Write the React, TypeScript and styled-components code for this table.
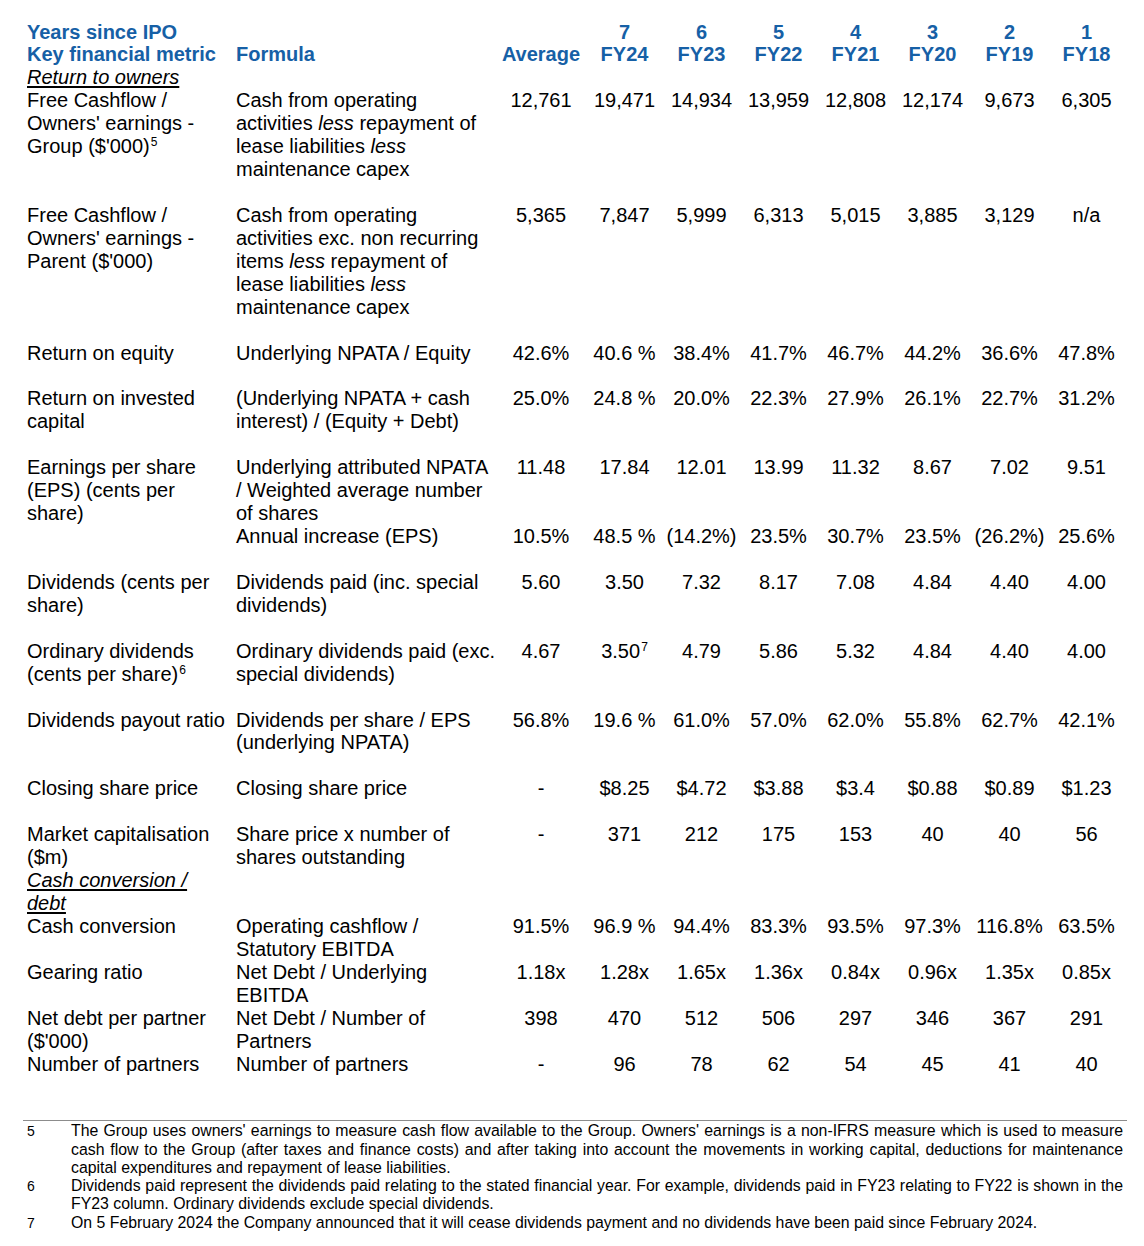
import React from "react";
import styled, { createGlobalStyle } from "styled-components";

const BLUE = "#1660a6";
const LH = "22.93px";
const COLS = "209px 260px 90px repeat(7, 77px)";

const Global = createGlobalStyle`
  html, body { margin: 0; padding: 0; background: #ffffff; }
  body { font-family: "Liberation Sans", Arial, sans-serif; color: #000; }
`;

const Page = styled.div`
  width: 1144px;
  padding-top: 20.5px;
  padding-bottom: 20px;
  box-sizing: border-box;
`;

const Table = styled.div`
  margin-left: 27px;
  font-size: 20px;
  line-height: ${LH};
`;

const Row = styled.div<{ $gap?: boolean }>`
  display: grid;
  grid-template-columns: ${COLS};
  align-items: start;
  margin-bottom: ${(p) => (p.$gap ? LH : "0")};
`;

const HeaderRow = styled(Row)`
  align-items: end;
  color: ${BLUE};
  font-weight: bold;
`;

const LabelCell = styled.div`
  padding-right: 6px;
`;

const FormulaCell = styled.div``;

const ValueCell = styled.div`
  text-align: center;
  white-space: nowrap;
`;

const HeadStack = styled.div<{ $center?: boolean }>`
  display: flex;
  flex-direction: column;
  align-items: ${(p) => (p.$center ? "center" : "flex-start")};
  white-space: nowrap;
`;

const SectionTitle = styled.div`
  grid-column: 1 / 2;
  padding-right: 6px;
  font-style: italic;
  text-decoration: underline;
  text-underline-offset: 2px;
`;

const Sup = styled.span`
  font-size: 12px;
  line-height: 0;
  vertical-align: 7px;
  margin-left: 1px;
`;

const Em = styled.i`
  font-style: italic;
`;

const Footnotes = styled.div`
  margin-top: 45px;
  margin-left: 23px;
  width: 1104px;
  border-top: 1px solid #8c8c8c;
  padding-top: 1px;
  font-size: 15.85px;
  line-height: 18.2px;
`;

const Note = styled.div`
  display: grid;
  grid-template-columns: 48px 1052px;
`;

const NoteNum = styled.div`
  padding-left: 4px;
  font-size: 14px;
`;

const NoteText = styled.div`
  text-align: justify;
`;

type DataRow = {
  label?: React.ReactNode;
  formula?: React.ReactNode;
  average: string;
  values: React.ReactNode[];
  gap?: boolean;
};

const years = [
  ["7", "FY24"],
  ["6", "FY23"],
  ["5", "FY22"],
  ["4", "FY21"],
  ["3", "FY20"],
  ["2", "FY19"],
  ["1", "FY18"],
];

const ownersRows: DataRow[] = [
  {
    label: (
      <>
        Free Cashflow / Owners' earnings - Group ($'000)<Sup>5</Sup>
      </>
    ),
    formula: (
      <>
        Cash from operating activities <Em>less</Em> repayment of lease liabilities <Em>less</Em> maintenance capex
      </>
    ),
    average: "12,761",
    values: ["19,471", "14,934", "13,959", "12,808", "12,174", "9,673", "6,305"],
    gap: true,
  },
  {
    label: "Free Cashflow / Owners' earnings - Parent ($'000)",
    formula: (
      <>
        Cash from operating activities exc. non recurring items <Em>less</Em> repayment of lease liabilities{" "}
        <Em>less</Em> maintenance capex
      </>
    ),
    average: "5,365",
    values: ["7,847", "5,999", "6,313", "5,015", "3,885", "3,129", "n/a"],
    gap: true,
  },
  {
    label: "Return on equity",
    formula: "Underlying NPATA / Equity",
    average: "42.6%",
    values: ["40.6 %", "38.4%", "41.7%", "46.7%", "44.2%", "36.6%", "47.8%"],
    gap: true,
  },
  {
    label: "Return on invested capital",
    formula: "(Underlying NPATA + cash interest) / (Equity + Debt)",
    average: "25.0%",
    values: ["24.8 %", "20.0%", "22.3%", "27.9%", "26.1%", "22.7%", "31.2%"],
    gap: true,
  },
  {
    label: "Earnings per share (EPS) (cents per share)",
    formula: "Underlying attributed NPATA / Weighted average number of shares",
    average: "11.48",
    values: ["17.84", "12.01", "13.99", "11.32", "8.67", "7.02", "9.51"],
  },
  {
    formula: "Annual increase (EPS)",
    average: "10.5%",
    values: ["48.5 %", "(14.2%)", "23.5%", "30.7%", "23.5%", "(26.2%)", "25.6%"],
    gap: true,
  },
  {
    label: "Dividends (cents per share)",
    formula: "Dividends paid (inc. special dividends)",
    average: "5.60",
    values: ["3.50", "7.32", "8.17", "7.08", "4.84", "4.40", "4.00"],
    gap: true,
  },
  {
    label: (
      <>
        Ordinary dividends (cents per share)<Sup>6</Sup>
      </>
    ),
    formula: "Ordinary dividends paid (exc. special dividends)",
    average: "4.67",
    values: [
      <>
        3.50<Sup>7</Sup>
      </>,
      "4.79",
      "5.86",
      "5.32",
      "4.84",
      "4.40",
      "4.00",
    ],
    gap: true,
  },
  {
    label: "Dividends payout ratio",
    formula: "Dividends per share / EPS (underlying NPATA)",
    average: "56.8%",
    values: ["19.6 %", "61.0%", "57.0%", "62.0%", "55.8%", "62.7%", "42.1%"],
    gap: true,
  },
  {
    label: "Closing share price",
    formula: "Closing share price",
    average: "-",
    values: ["$8.25", "$4.72", "$3.88", "$3.4", "$0.88", "$0.89", "$1.23"],
    gap: true,
  },
  {
    label: "Market capitalisation ($m)",
    formula: "Share price x number of shares outstanding",
    average: "-",
    values: ["371", "212", "175", "153", "40", "40", "56"],
  },
];

const debtRows: DataRow[] = [
  {
    label: "Cash conversion",
    formula: "Operating cashflow / Statutory EBITDA",
    average: "91.5%",
    values: ["96.9 %", "94.4%", "83.3%", "93.5%", "97.3%", "116.8%", "63.5%"],
  },
  {
    label: "Gearing ratio",
    formula: "Net Debt / Underlying EBITDA",
    average: "1.18x",
    values: ["1.28x", "1.65x", "1.36x", "0.84x", "0.96x", "1.35x", "0.85x"],
  },
  {
    label: "Net debt per partner ($'000)",
    formula: "Net Debt / Number of Partners",
    average: "398",
    values: ["470", "512", "506", "297", "346", "367", "291"],
  },
  {
    label: "Number of partners",
    formula: "Number of partners",
    average: "-",
    values: ["96", "78", "62", "54", "45", "41", "40"],
  },
];

const notes: [string, string][] = [
  [
    "5",
    "The Group uses owners' earnings to measure cash flow available to the Group. Owners' earnings is a non-IFRS measure which is used to measure cash flow to the Group (after taxes and finance costs) and after taking into account the movements in working capital, deductions for maintenance capital expenditures and repayment of lease liabilities.",
  ],
  [
    "6",
    "Dividends paid represent the dividends paid relating to the stated financial year. For example, dividends paid in FY23 relating to FY22 is shown in the FY23 column. Ordinary dividends exclude special dividends.",
  ],
  [
    "7",
    "On 5 February 2024 the Company announced that it will cease dividends payment and no dividends have been paid since February 2024.",
  ],
];

const MetricRow: React.FC<{ row: DataRow }> = ({ row }) => (
  <Row $gap={row.gap}>
    <LabelCell>{row.label}</LabelCell>
    <FormulaCell>{row.formula}</FormulaCell>
    <ValueCell>{row.average}</ValueCell>
    {row.values.map((v, i) => (
      <ValueCell key={i}>{v}</ValueCell>
    ))}
  </Row>
);

export default function App() {
  return (
    <Page>
      <Global />
      <Table>
        <HeaderRow>
          <HeadStack>
            <span>Years since IPO</span>
            <span>Key financial metric</span>
          </HeadStack>
          <HeadStack>
            <span>Formula</span>
          </HeadStack>
          <HeadStack $center>
            <span>Average</span>
          </HeadStack>
          {years.map(([n, fy]) => (
            <HeadStack $center key={fy}>
              <span>{n}</span>
              <span>{fy}</span>
            </HeadStack>
          ))}
        </HeaderRow>
        <Row>
          <SectionTitle>Return to owners</SectionTitle>
        </Row>
        {ownersRows.map((r, i) => (
          <MetricRow row={r} key={i} />
        ))}
        <Row>
          <SectionTitle>Cash conversion / debt</SectionTitle>
        </Row>
        {debtRows.map((r, i) => (
          <MetricRow row={r} key={i} />
        ))}
      </Table>
      <Footnotes>
        {notes.map(([n, t]) => (
          <Note key={n}>
            <NoteNum>{n}</NoteNum>
            <NoteText>{t}</NoteText>
          </Note>
        ))}
      </Footnotes>
    </Page>
  );
}
